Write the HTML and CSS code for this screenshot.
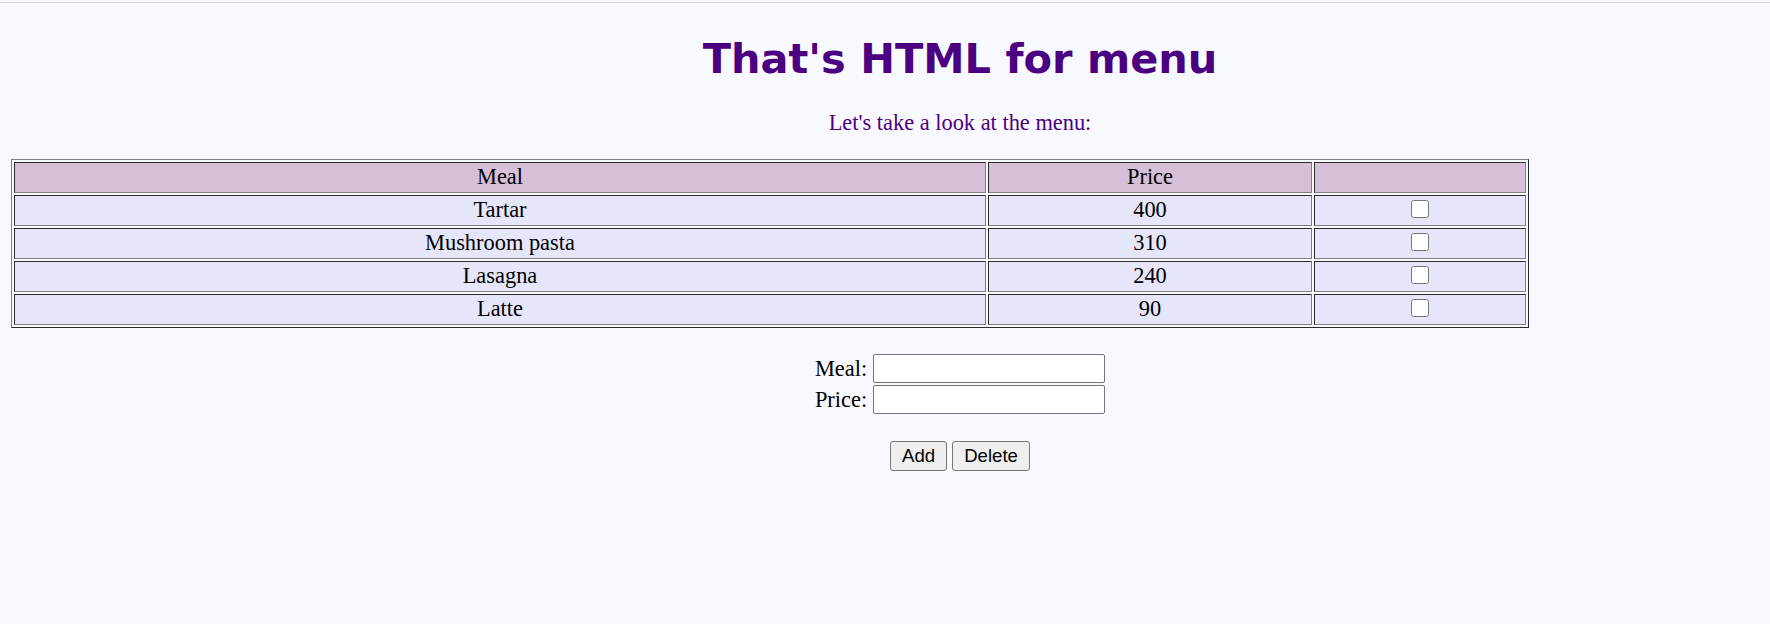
FILE: index.html
```html
<!DOCTYPE html>
<html lang="en">
<head>
<meta charset="utf-8">
<title>Menu</title>
<link rel="stylesheet" href="styles.css">
</head>
<body>
<div class="topline"></div>
<div class="page">
  <h1 class="title centered">That's HTML for menu</h1>
  <p class="intro centered">Let's take a look at the menu:</p>
  <table class="menu">
    <colgroup>
      <col class="col-meal">
      <col class="col-price">
      <col class="col-check">
    </colgroup>
    <thead>
      <tr><th>Meal</th><th>Price</th><th></th></tr>
    </thead>
    <tbody>
      <tr><td>Tartar</td><td>400</td><td><input class="check" type="checkbox"></td></tr>
      <tr><td>Mushroom pasta</td><td>310</td><td><input class="check" type="checkbox"></td></tr>
      <tr><td>Lasagna</td><td>240</td><td><input class="check" type="checkbox"></td></tr>
      <tr><td>Latte</td><td>90</td><td><input class="check" type="checkbox"></td></tr>
    </tbody>
  </table>
  <form class="form centered">
    <div class="row"><label class="label" for="meal">Meal:</label><input class="field" id="meal" type="text"></div>
    <div class="row"><label class="label" for="price">Price:</label><input class="field" id="price" type="text"></div>
    <div class="buttons">
      <button class="btn" type="button">Add</button>
      <button class="btn" type="button">Delete</button>
    </div>
  </form>
</div>
</body>
</html>
```
FILE: styles.css
```css
html, body {
  margin: 0;
  padding: 0;
  background: #f8f8ff;
  overflow: hidden;
}

.topline {
  margin-top: 2px;
  height: 1px;
  background: #d4d4d4;
}

.page {
  margin-left: 11px;
  font-family: "Liberation Serif", "Times New Roman", serif;
  font-size: 22.4px;
  color: #000;
}

.centered {
  padding-left: 139px;
}

.title {
  margin: 32px 0 0;
  font-family: "DejaVu Sans", Verdana, sans-serif;
  font-weight: bold;
  font-size: 41.5px;
  line-height: 48px;
  color: #4b0082;
  text-align: center;
}

.intro {
  margin: 27px 0 0;
  line-height: 25px;
  color: #4b0082;
  text-align: center;
}

.menu {
  margin-top: 24px;
  width: 1518px;
  table-layout: fixed;
  border: 1px outset grey;
  border-spacing: 2px;
}

.col-meal { width: 972px; }
.col-price { width: 324px; }
.col-check { width: 212px; }

.menu th,
.menu td {
  border: 1px inset grey;
  padding: 0 1px 2px;
  height: 27px;
  line-height: 27px;
  text-align: center;
  vertical-align: top;
  font-weight: normal;
}

.menu th { background: #d8bfd8; }
.menu td { background: #e6e6fa; }

.check {
  width: 18px;
  height: 18px;
  margin: 4px 0 0;
  vertical-align: top;
}

.form {
  margin: 25px 0 0;
}

.row {
  display: flex;
  justify-content: center;
  align-items: center;
  gap: 6px;
  height: 31px;
}

.label {
  line-height: 25px;
}

.field {
  box-sizing: border-box;
  width: 232px;
  height: 29px;
  margin: 0;
  padding: 1px 3px;
  border: 1px solid #767676;
  border-radius: 2px;
  background: #fff;
  font-family: "Liberation Sans", Arial, sans-serif;
  font-size: 18px;
}

.buttons {
  display: flex;
  justify-content: center;
  gap: 5px;
  margin-top: 26px;
}

.btn {
  box-sizing: border-box;
  height: 30px;
  margin: 0;
  padding: 0 11px;
  border: 1px solid #767676;
  border-radius: 3px;
  background: #efefef;
  font-family: "Liberation Sans", Arial, sans-serif;
  font-size: 18.6px;
  color: #000;
}
```
